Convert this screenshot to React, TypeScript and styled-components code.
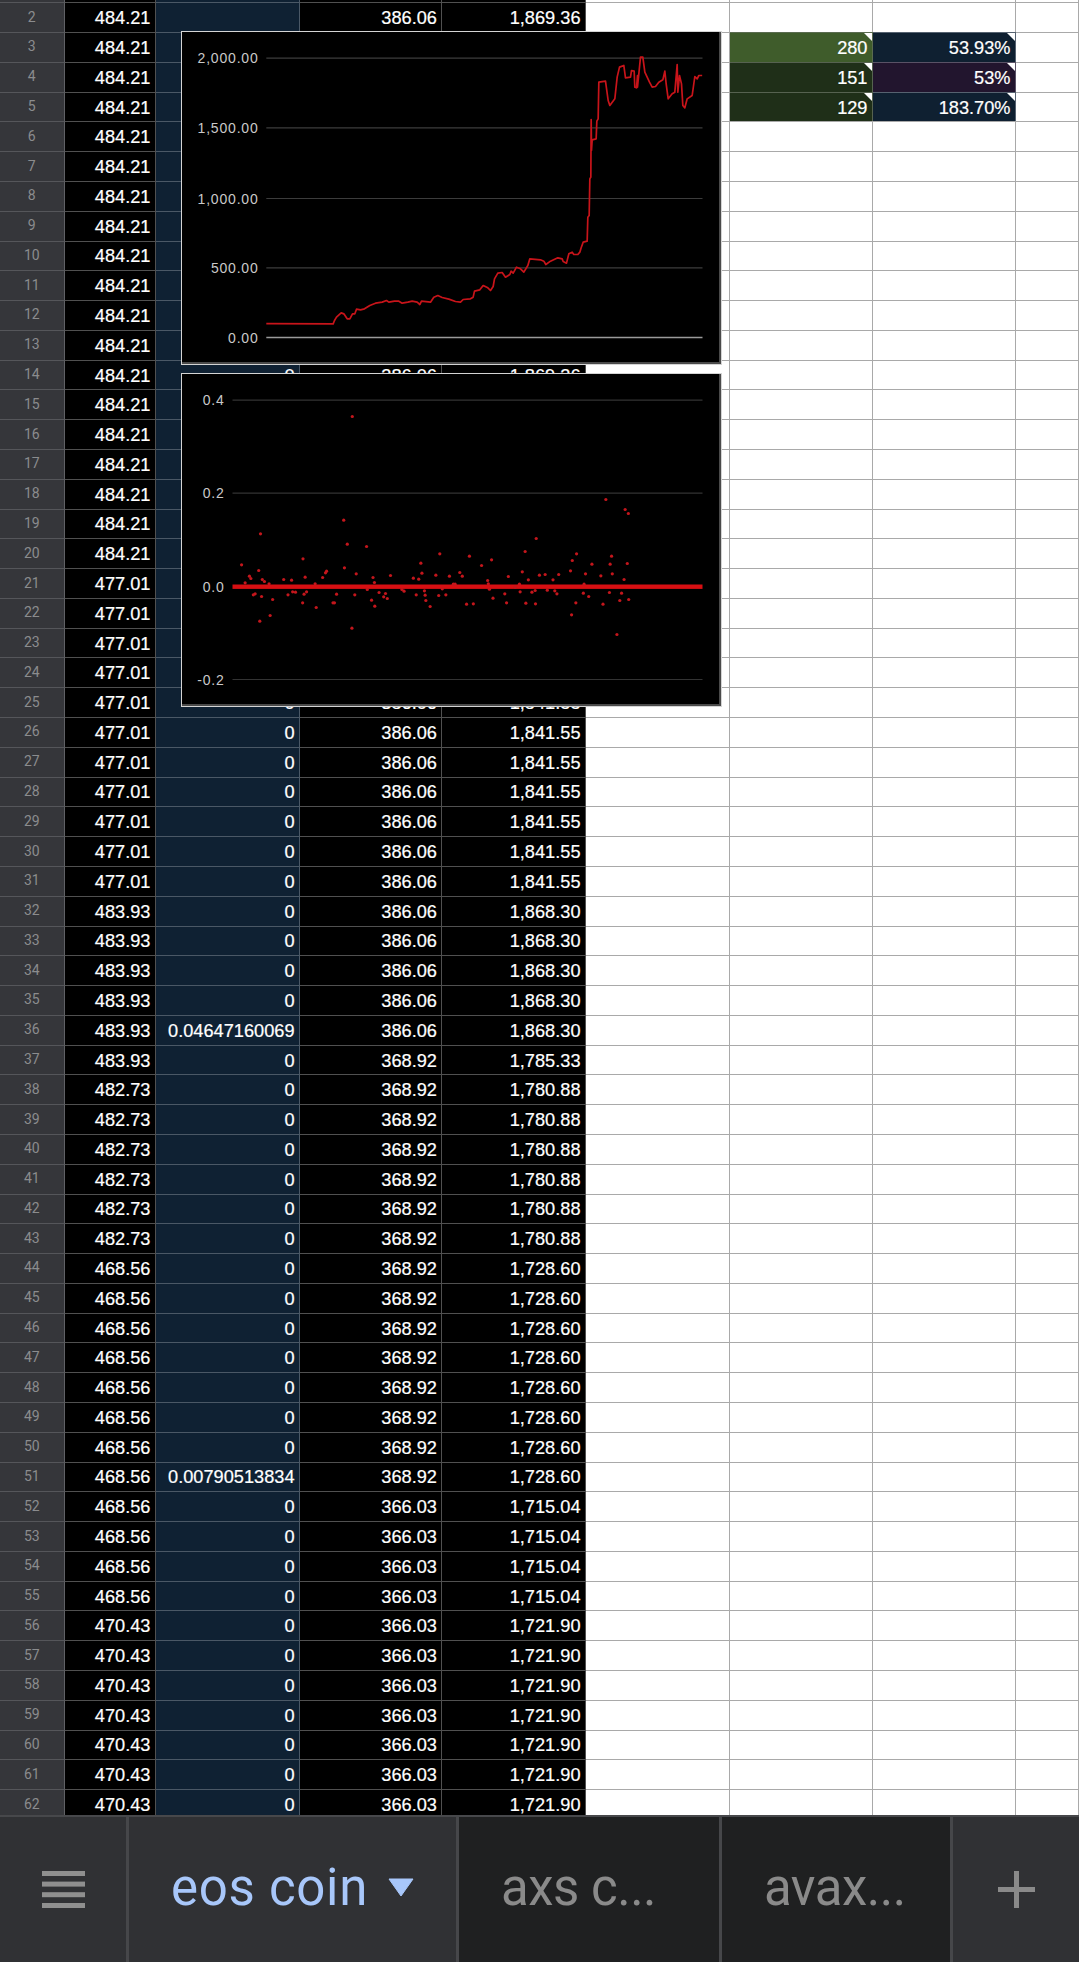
import styled, { createGlobalStyle } from "styled-components";

const GlobalStyle = createGlobalStyle`
  html, body {
    margin: 0;
    padding: 0;
    background: #fff;
  }
  * {
    box-sizing: border-box;
  }
`;

const Page = styled.div`
  width: 1079px;
  height: 1962px;
  display: flex;
  flex-direction: column;
  overflow: hidden;
  font-family: "Liberation Sans", Arial, sans-serif;
`;

const Sheet = styled.div`
  position: relative;
  flex: 1;
  overflow: hidden;
`;

const Rows = styled.div`
  margin-top: -27.5px;
`;

const Row = styled.div`
  display: grid;
  grid-template-columns: 64.5px 91px 144px 142.5px 143.5px 144px 143px 143px 1fr;
  height: 29.79px;
`;

const tones = {
  black: { bg: "#000", line: "#505050" },
  navy: { bg: "#0f2133", line: "#4a5866" },
  white: { bg: "#fff", line: "#a9a9a9" },
  bright: { bg: "#3f5c2b", line: "#5a6b50" },
  green: { bg: "#1f2f18", line: "#566250" },
  plum: { bg: "#22152e", line: "#5a5266" },
  ocean: { bg: "#0f2031", line: "#566270" },
};

type Tone = keyof typeof tones;

const Cell = styled.div<{ $tone: Tone; $note?: boolean }>`
  position: relative;
  display: flex;
  align-items: center;
  justify-content: flex-end;
  padding: 2px 4px 0 0;
  font-size: 18.2px;
  color: #fff;
  -webkit-text-stroke: 0.2px #fff;
  white-space: nowrap;
  background: ${(p) => tones[p.$tone].bg};
  border-top: 1px solid ${(p) => tones[p.$tone].line};
  border-right: 1px solid ${(p) => tones[p.$tone].line};

  ${(p) =>
    p.$note &&
    `&::after {
      content: "";
      position: absolute;
      top: 0;
      right: 0;
      border-style: solid;
      border-width: 0 8px 8px 0;
      border-color: transparent #fff transparent transparent;
    }`}
`;

const RowNumber = styled.div`
  display: flex;
  align-items: center;
  justify-content: center;
  padding-bottom: 2px;
  font-family: Roboto, sans-serif;
  font-size: 14px;
  color: #8b8c8e;
  background: #35363a;
  border-top: 1px solid #55565a;
  border-right: 1px solid #606165;
`;

const ChartFrame = styled.div<{ $top: number }>`
  position: absolute;
  left: 180.5px;
  top: ${(p) => p.$top}px;
  width: 541.5px;
  height: 334.5px;
  background: #000;
  border: 1px solid #d4d4d4;
  box-shadow: inset -2px -2px 0 #4a4a4a;

  svg {
    display: block;
    position: absolute;
    left: -1px;
    top: -1px;
  }

  text {
    font-family: "Liberation Sans", Arial, sans-serif;
    font-size: 14px;
    letter-spacing: 0.8px;
    fill: #c9c9c9;
    text-anchor: end;
  }
`;

const TabBar = styled.div`
  flex: none;
  height: 147px;
  display: grid;
  grid-template-columns: 129px 330px 263px 231px 1fr;
  border-top: 2px solid #47484b;
  background: #303134;
  font-family: Roboto, sans-serif;
`;

const IconSlot = styled.div`
  display: flex;
  align-items: center;
  justify-content: center;
  background: #303134;

  &:first-child {
    border-right: 3px solid #46474a;
  }
`;

const Tab = styled.div<{ $active?: boolean }>`
  display: flex;
  align-items: center;
  gap: 20px;
  padding: 0 0 4px 42px;
  font-size: 51px;
  letter-spacing: ${(p) => (p.$active ? "0.7px" : "-0.5px")};
  white-space: nowrap;
  color: ${(p) => (p.$active ? "#a8c7fa" : "#8a8a8a")};
  background: ${(p) => (p.$active ? "#303134" : "#1f2021")};
  border-right: 3px solid #46474a;
`;

type Range = [number, string];

// last row of each run -> value shown down to it
const colA: Range[] = [[20, "484.21"], [31, "477.01"], [37, "483.93"], [43, "482.73"], [55, "468.56"], [62, "470.43"]];
const colC: Range[] = [[36, "386.06"], [51, "368.92"], [62, "366.03"]];
const colD: Range[] = [
  [20, "1,869.36"],
  [31, "1,841.55"],
  [36, "1,868.30"],
  [37, "1,785.33"],
  [43, "1,780.88"],
  [51, "1,728.60"],
  [55, "1,715.04"],
  [62, "1,721.90"],
];

const valueAt = (col: Range[], row: number) => col.find(([last]) => row <= last)?.[1] ?? "";

const colB = (row: number) => {
  if (row < 3) return "";
  if (row === 36) return "0.04647160069";
  if (row === 51) return "0.00790513834";
  return "0";
};

const stats: Record<number, { count: string; countTone: Tone; pct: string; pctTone: Tone }> = {
  3: { count: "280", countTone: "bright", pct: "53.93%", pctTone: "ocean" },
  4: { count: "151", countTone: "green", pct: "53%", pctTone: "plum" },
  5: { count: "129", countTone: "green", pct: "183.70%", pctTone: "ocean" },
};

const rowNumbers = Array.from({ length: 62 }, (_, i) => i + 1);

// traced off the reference, in page pixels
const crop = (ox: number, oy: number, pts: number[][]) => pts.map(([x, y]) => [ox + x / 3, oy + y / 3]);

const balanceLine = [
  [265.8, 323.2],
  ...crop(320, 250, [
    [38, 220], [42, 210], [48, 200], [62, 187], [70, 190], [80, 205], [88, 205], [96, 190], [103, 190], [108, 176],
    [120, 178], [132, 175], [148, 165], [165, 158], [185, 155], [198, 150], [205, 155], [222, 152], [235, 152],
    [245, 158], [262, 155], [275, 152], [290, 155], [298, 162], [303, 152], [330, 155], [340, 140], [352, 135],
    [365, 141], [385, 146], [405, 153], [420, 155], [428, 147], [450, 145], [458, 140], [462, 122], [478, 118],
    [488, 105], [502, 112], [510, 120], [518, 108], [522, 85], [532, 68], [545, 66], [555, 80], [568, 72], [572, 62],
    [578, 68], [588, 50], [600, 55], [610, 65], [622, 45], [628, 25], [660, 28], [670, 32], [676, 42], [690, 32],
    [712, 22], [725, 25], [728, 33], [738, 38], [745, 10], [755, 5], [760, 12], [772, 12], [778, 5],
  ]),
  ...crop(560, 130, [
    [62, 352], [68, 335], [80, 332], [82, 260], [86, 255], [88, 145], [91, 140],
  ]),
  ...crop(575, 50, [
    [47, 207], [48, 300], [50, 268], [62, 265], [64, 212], [68, 205], [70, 95], [90, 92], [98, 150], [103, 165],
    [118, 145], [125, 80], [132, 50], [145, 45], [150, 82], [165, 80], [168, 60], [176, 62], [178, 110], [183, 112],
    [186, 75], [186, 110], [190, 70], [195, 20], [202, 20], [208, 65], [222, 95], [230, 110], [240, 108], [250, 95],
    [262, 88], [268, 62], [272, 100], [278, 145], [290, 130], [298, 125], [305, 42], [307, 125], [312, 75], [318, 100],
    [322, 165], [328, 172], [335, 145], [350, 135], [358, 78], [365, 85], [370, 75], [380, 75],
  ]),
];

const scatter = [
  [199,613],[209,667],[221,647],[225,654],[232,703],[237,700],[247,630],[252,520],[250,782],[255,708],[257,657],[263,663],
  [276,670],[279,765],[286,717],[317,657],[329,703],[339,659],[342,694],[350,695],[370,727],[371,595],[374,701],[377,650],
  [381,694],[405,670],[408,741],[426,651],[434,637],[437,632],[455,727],[459,727],[465,701],[485,479],[487,622],[495,551],
  [508,803],[509,168],[516,703],[520,640],[549,558],[551,687],[563,719],[567,651],[571,666],[572,737],[584,696],[597,709],
  [602,699],[607,714],[616,645],[648,687],[654,692],[680,653],[688,703],[695,656],[701,608],[704,638],[711,691],[713,704],
  [715,720],[727,738],[743,644],[751,705],[754,580],[761,685],[771,703],[781,647],[792,671],[797,671],[810,636],[817,647],
  [829,731],[837,587],[848,730],[871,615],[888,660],[890,670],[893,686],[899,598],[903,713],[936,700],[941,727],[946,648],
  [965,680],[977,671],[979,694],[985,634],[993,573],[995,728],[1002,658],[1012,695],[1021,690],[1022,730],[1024,534],
  [1033,644],[1049,642],[1055,689],[1071,658],[1076,691],[1082,700],[1087,642],[1120,631],[1123,763],[1125,600],[1135,727],
  [1137,580],[1156,698],[1158,671],[1162,640],[1171,708],[1180,611],[1205,646],[1211,731],[1219,417],[1229,696],[1231,611],
  [1235,587],[1237,640],[1250,822],[1258,720],[1263,698],[1270,657],[1273,447],[1279,609],[1282,459],[1283,717],
].map(([x, y]) => [170 + x / 2.8, 360 + y / 3]);

function BalanceChart() {
  const ticks = [
    { y: 57.7, label: "2,000.00" },
    { y: 127.3, label: "1,500.00" },
    { y: 198, label: "1,000.00" },
    { y: 267.3, label: "500.00" },
    { y: 337, label: "0.00" },
  ];
  return (
    <svg width="542" height="335" viewBox="180.5 30.5 542 335">
      {ticks.map((t, i) => (
        <g key={t.label}>
          <line x1="265.8" x2="702" y1={t.y} y2={t.y} stroke={i === 4 ? "#9a9a9a" : "#3c3c3c"} strokeWidth={i === 4 ? 1.5 : 1.2} />
          <text x="258" y={t.y + 5}>{t.label}</text>
        </g>
      ))}
      <polyline
        points={balanceLine.map((p) => p.join(",")).join(" ")}
        fill="none"
        stroke="#c8141a"
        strokeWidth="1.7"
        strokeLinejoin="round"
      />
    </svg>
  );
}

function ReturnsChart() {
  const ticks = [
    { y: 399.7, label: "0.4" },
    { y: 492.7, label: "0.2" },
    { y: 679, label: "-0.2" },
  ];
  return (
    <svg width="542" height="335" viewBox="180.5 372.5 542 335">
      {ticks.map((t) => (
        <g key={t.label}>
          <line x1="232" x2="702" y1={t.y} y2={t.y} stroke="#333" strokeWidth="1.2" />
          <text x="224" y={t.y + 5}>{t.label}</text>
        </g>
      ))}
      <text x="224" y="591">0.0</text>
      <rect x="232" y="584" width="470" height="4.4" fill="#d70f12" />
      {scatter.map(([x, y], i) => (
        <circle key={i} cx={x} cy={y} r="1.6" fill="#c4161c" />
      ))}
    </svg>
  );
}

function App() {
  return (
    <Page>
      <GlobalStyle />
      <Sheet>
        <Rows>
          {rowNumbers.map((n) => {
            const stat = stats[n];
            const blank = n === 1;
            return (
              <Row key={n}>
                <RowNumber>{!blank && n}</RowNumber>
                <Cell $tone="black">{!blank && valueAt(colA, n)}</Cell>
                <Cell $tone="navy">{colB(n)}</Cell>
                <Cell $tone="black">{!blank && valueAt(colC, n)}</Cell>
                <Cell $tone="black">{!blank && valueAt(colD, n)}</Cell>
                <Cell $tone="white" />
                <Cell $tone={stat ? stat.countTone : "white"} $note={!!stat}>{stat?.count}</Cell>
                <Cell $tone={stat ? stat.pctTone : "white"} $note={!!stat}>{stat?.pct}</Cell>
                <Cell $tone="white" />
              </Row>
            );
          })}
        </Rows>
        <ChartFrame $top={30.5}>
          <BalanceChart />
        </ChartFrame>
        <ChartFrame $top={372.5}>
          <ReturnsChart />
        </ChartFrame>
      </Sheet>
      <TabBar>
        <IconSlot>
          <svg width="43" height="37" viewBox="0 0 43 37" fill="#8f8f8f">
            <rect y="0" width="43" height="5" />
            <rect y="10.6" width="43" height="5" />
            <rect y="21.2" width="43" height="5" />
            <rect y="32" width="43" height="5" />
          </svg>
        </IconSlot>
        <Tab $active>
          eos coin
          <svg width="26" height="19" viewBox="0 0 26 19" fill="#a8c7fa">
            <polygon points="1,1 25,1 13,18" stroke="#a8c7fa" strokeWidth="1" strokeLinejoin="round" />
          </svg>
        </Tab>
        <Tab>axs c...</Tab>
        <Tab>avax...</Tab>
        <IconSlot>
          <svg width="37" height="37" viewBox="0 0 37 37" fill="#8a8a8a">
            <rect x="16" y="0" width="5" height="37" />
            <rect x="0" y="16" width="37" height="5" />
          </svg>
        </IconSlot>
      </TabBar>
    </Page>
  );
}

export default App;
